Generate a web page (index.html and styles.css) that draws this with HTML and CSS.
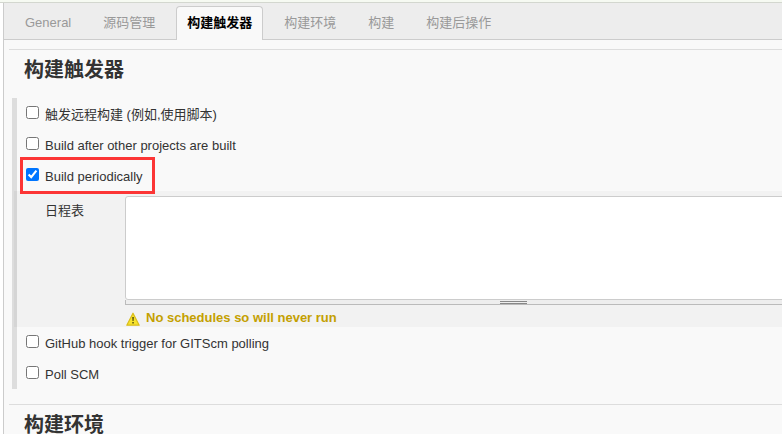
FILE: index.html
```
<!DOCTYPE html>
<html lang="zh-CN">
<head>
  <meta charset="UTF-8" />
  <title>构建触发器</title>
  <link rel="stylesheet" href="styles.css">
</head>
<body>
  <div class="top-strip"></div>

  <main class="config">
    <nav class="tab-bar">
      <a href="#" class="tab">General</a>
      <a href="#" class="tab">源码管理</a>
      <a href="#triggers" class="tab active">构建触发器</a>
      <a href="#environment" class="tab">构建环境</a>
      <a href="#" class="tab">构建</a>
      <a href="#" class="tab">构建后操作</a>
    </nav>

    <form>
      <section id="triggers">
        <h2>构建触发器</h2>
        <div class="options">
          <div class="option">
            <input type="checkbox" id="remote" />
            <label for="remote">触发远程构建 (例如,使用脚本)</label>
          </div>
          <div class="option">
            <input type="checkbox" id="upstream" />
            <label for="upstream">Build after other projects are built</label>
          </div>
          <div class="option marked">
            <input type="checkbox" id="timer" checked />
            <label for="timer">Build periodically</label>
          </div>
          <div class="schedule">
            <label for="spec">日程表</label>
            <div class="schedule-field">
              <textarea id="spec"></textarea>
              <div class="resize-handle"><span class="grip"></span></div>
              <p class="warning">
                <svg width="14" height="14" viewBox="0 0 14 14">
                  <path d="M7 1.2 L13.2 13.2 H0.8 Z" fill="#f7e32c" stroke="#d9bd1c" stroke-width="1.2" stroke-linejoin="round" />
                  <path d="M6.2 5 h1.7 l-.3 4 h-1.1 z M6.3 10 h1.5 v1.5 h-1.5 z" fill="#55500f" />
                </svg>
                No schedules so will never run
              </p>
            </div>
          </div>
          <div class="option">
            <input type="checkbox" id="github" />
            <label for="github">GitHub hook trigger for GITScm polling</label>
          </div>
          <div class="option">
            <input type="checkbox" id="poll" />
            <label for="poll">Poll SCM</label>
          </div>
        </div>
      </section>

      <section id="environment">
        <h2>构建环境</h2>
      </section>
    </form>
  </main>
</body>
</html>
```
FILE: styles.css
```
*,
*::before {
  box-sizing: border-box;
}

body {
  margin: 0;
  overflow: hidden;
  background-color: #fff;
  color: #333;
  font-family: "Liberation Sans", Arial, "Noto Sans CJK SC", sans-serif;
  font-size: 13px;
  line-height: 16px;
}

.top-strip {
  height: 3px;
  background-color: #f6faf2;
  border-bottom: 1px solid #d3d7cf;
}

/* the form keeps its desktop width on narrow windows */
.config {
  min-width: 904px;
  margin-left: 3px;
  border-left: 1px solid #ccc;
  background-color: #f9f9f9;
}

/* Tabs */
.tab-bar {
  display: flex;
  gap: 10px;
  height: 37px;
  padding: 3px 10px 0;
  background-color: #ededed;
  border-bottom: 1px solid #ccc;
}

.tab {
  height: 34px;
  padding: 8px 10px;
  border: 1px solid transparent;
  border-bottom: none;
  border-radius: 4px 4px 0 0;
  color: #999;
  text-decoration: none;
}

.tab.active {
  background-color: #f9f9f9;
  border-color: #ccc;
  color: #000;
  font-weight: bold;
}

/* Sections */
form {
  padding: 9px 5px 0;
}

section {
  margin-bottom: 15px;
  border-top: 1px solid #ddd;
}

h2 {
  margin: 0;
  padding: 4px 15px 12px;
  font-size: 20px;
  line-height: 32px;
}

.options {
  margin-left: 3px;
  border-left: 5px solid #ddd;
}

.option {
  position: relative;
  display: flex;
  align-items: flex-start;
  height: 31px;
  padding: 8px 9px 0;
}

.option input {
  width: 13px;
  height: 13px;
  margin: 0 6px 0 0;
}

.option label {
  padding-top: 1px;
}

.marked::before {
  content: "";
  position: absolute;
  z-index: 1;
  top: -3px;
  left: 3px;
  width: 135px;
  height: 37px;
  border: 3px solid #fc3535;
  pointer-events: none;
}

.schedule {
  display: flex;
  margin-left: -3px;
  padding: 5px 0 0 28px;
  border-left: 3px solid #d5d5d5;
  background-color: #f2f2f2;
}

.schedule > label {
  width: 80px;
  padding-top: 7px;
}

.schedule-field {
  flex: 1;
}

textarea {
  display: block;
  width: 100%;
  height: 104px;
  border: 1px solid #ccc;
  border-radius: 3px;
  background-color: #fff;
  resize: none;
}

.resize-handle {
  display: flex;
  justify-content: center;
  height: 5px;
  border: 1px solid #bbb;
  border-top: none;
  background-color: #eee;
}

.grip {
  width: 27px;
  height: 3px;
  margin-top: 1px;
  border-top: 1px solid #888;
  border-bottom: 1px solid #888;
}

.warning {
  display: flex;
  gap: 6px;
  margin: 0;
  padding: 5px 1px 1px;
  color: #c4a000;
  font-weight: bold;
}

.warning svg {
  margin-top: 2px;
}
```
